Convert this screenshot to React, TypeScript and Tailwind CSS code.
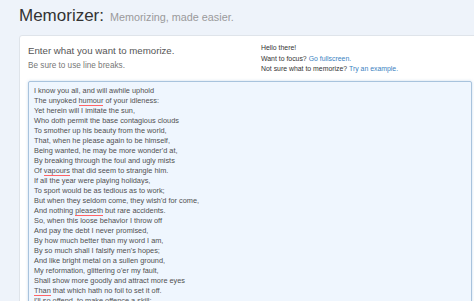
const lines: { text: string; typo?: string }[] = [
  { text: "I know you all, and will awhile uphold" },
  { text: "The unyoked humour of your idleness:", typo: "humour" },
  { text: "Yet herein will I imitate the sun," },
  { text: "Who doth permit the base contagious clouds" },
  { text: "To smother up his beauty from the world," },
  { text: "That, when he please again to be himself," },
  { text: "Being wanted, he may be more wonder'd at," },
  { text: "By breaking through the foul and ugly mists" },
  { text: "Of vapours that did seem to strangle him.", typo: "vapours" },
  { text: "If all the year were playing holidays," },
  { text: "To sport would be as tedious as to work;" },
  { text: "But when they seldom come, they wish'd for come," },
  { text: "And nothing pleaseth but rare accidents.", typo: "pleaseth" },
  { text: "So, when this loose behavior I throw off" },
  { text: "And pay the debt I never promised," },
  { text: "By how much better than my word I am," },
  { text: "By so much shall I falsify men's hopes;" },
  { text: "And like bright metal on a sullen ground," },
  { text: "My reformation, glittering o'er my fault," },
  { text: "Shall show more goodly and attract more eyes" },
  { text: "Than that which hath no foil to set it off.", typo: "Than" },
  { text: "I'll so offend, to make offence a skill;", typo: "offend" },
];

function Line({ text, typo }: { text: string; typo?: string }) {
  if (!typo) return <div className="whitespace-pre">{text}</div>;
  const i = text.indexOf(typo);
  return (
    <div className="whitespace-pre">
      {text.slice(0, i)}
      <span className="relative">
        {typo}
        <span className="absolute left-0 right-0 bottom-[-1px] h-px bg-red-400" />
      </span>
      {text.slice(i + typo.length)}
    </div>
  );
}

export default function App() {
  return (
    <div
      className="h-[301px] w-[474px] overflow-hidden bg-[#eef3fa]"
      style={{ fontFamily: '"Liberation Sans", Arial, sans-serif' }}
    >
      <div className="flex items-baseline gap-[6px] pl-[19px] pt-[4px] h-[35px]">
        <h1 className="text-[17px] leading-[24px] text-[#333]">Memorizer:</h1>
        <span className="text-[10.8px] text-[#9a9a9a]">Memorizing, made easier.</span>
      </div>

      <div className="ml-[19px] w-[462px] rounded-[3px] border border-[#dfe4ea] bg-white px-[8px] pt-[7px]">
        <div className="flex h-[38px]">
          <div className="w-[233px]">
            <div className="text-[9.7px] leading-[14px] pt-[1px] text-[#555]">
              Enter what you want to memorize.
            </div>
            <div className="text-[8.2px] leading-[12px] pt-[2px] text-[#777]">
              Be sure to use line breaks.
            </div>
          </div>
          <div className="text-[6.9px] leading-[10.5px] text-[#333]">
            <div>Hello there!</div>
            <div>
              Want to focus? <span className="text-[#3a7fc1]">Go fullscreen.</span>
            </div>
            <div>
              Not sure what to memorize? <span className="text-[#3a7fc1]">Try an example.</span>
            </div>
          </div>
        </div>

        <div className="h-[240px] rounded-[2px] border border-[#a8c3dd] bg-[#eff6fe] px-[5px] pt-[4px] text-[7.35px] leading-[10px] text-[#505050] shadow-[0_0_3px_rgba(102,150,200,0.35)]">
          {lines.map((l) => (
            <Line key={l.text} text={l.text} typo={l.typo} />
          ))}
        </div>
      </div>
    </div>
  );
}
